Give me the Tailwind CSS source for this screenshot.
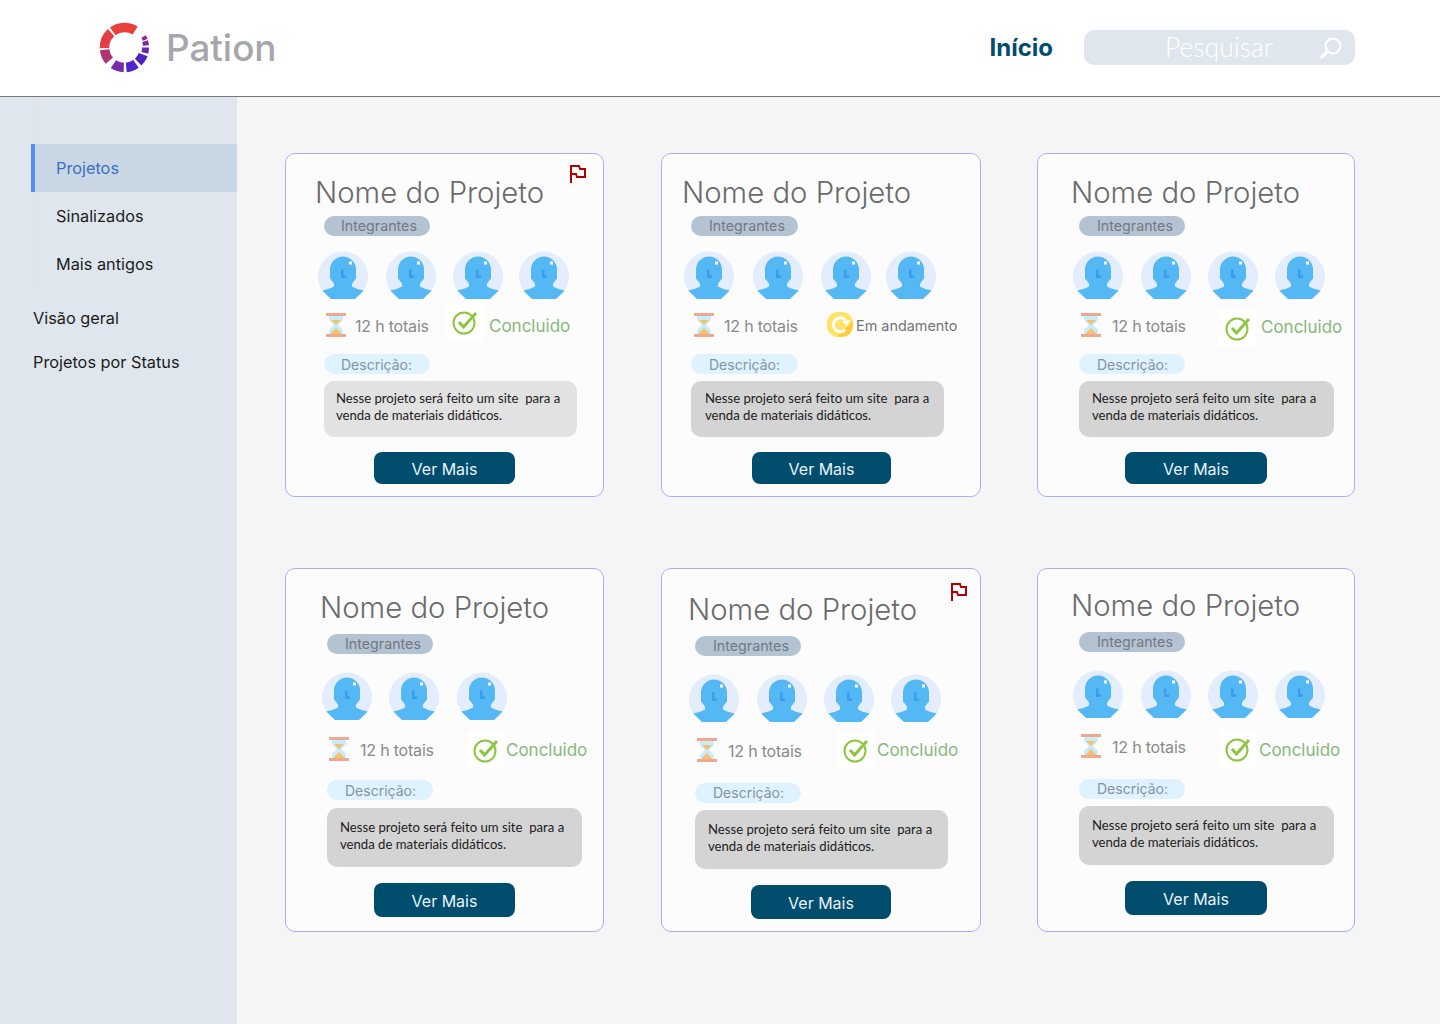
<!DOCTYPE html>
<html lang="pt-BR">
<head>
    <meta charset="UTF-8">
    <meta name="viewport" content="width=device-width, initial-scale=1.0">
    <title>Pation</title>
    <script src="https://cdn.jsdelivr.net/npm/@tailwindcss/browser@4"></script>
</head>
<body class="bg-[#f5f5f5] font-['Inter',sans-serif]">
    <!-- icons -->
    <svg class="hidden" xmlns="http://www.w3.org/2000/svg">
        <symbol id="avatar" viewBox="0 -1.500 50 50">
            <path fill="#e3edfb" d="M14.100 47.500A25 25 0 1 1 35.900 47.500z"/>
            <path fill="#53b8f4" d="M12 18a13 13 0 0 1 26 0v9l-4 5v3c3 2 8 3 11.700 4L37 47.500H13L4.300 39c3.700-1 8.700-2 11.700-4v-3l-4-5z"/>
            <path fill="#3d9be8" d="M23 18h2.500v6H28v2.500h-5z"/>
            <rect x="31" y="10" width="3" height="3" fill="#fff"/>
        </symbol>
        <symbol id="hourglass" viewBox="0 0 20 24">
            <path fill="#c9ecfa" d="M3 2h14v5l-5 5 5 5v5H3v-5l5-5-5-5z"/>
            <path fill="#f5c36e" d="M5 7h10l-5 5zM10 15l5 5v1H5v-1z"/>
            <rect x="0" y="0" width="20" height="3" fill="#eea890"/>
            <rect x="0" y="21" width="20" height="3" fill="#eea890"/>
        </symbol>
        <symbol id="check" viewBox="0 0 26 26">
            <circle cx="12" cy="14" r="10.500" fill="none" stroke="#8cc63f" stroke-width="2"/>
            <path fill="none" stroke="#8cc63f" stroke-width="3" d="M7 13l4.500 5L24 4"/>
        </symbol>
        <symbol id="flag" viewBox="0 0 16 18">
            <path fill="none" stroke="#b00000" stroke-width="2" d="M1 18V1h8l1 3h5v8H7l-1-3H1"/>
        </symbol>
    </svg>

    <header class="h-[97px] pb-[1px] bg-white border-b border-[#777777] flex items-center">
        <svg class="ml-[99px] w-[51px] h-[51px]" viewBox="0 0 51 51" fill="none" stroke-width="9.500">
            <circle cx="25.500" cy="25.500" r="20" pathLength="360" stroke="#e8413c" stroke-dasharray="68 360" transform="rotate(-126 25.500 25.500)"/>
            <circle cx="25.500" cy="25.500" r="20" pathLength="360" stroke="#e23e48" stroke-dasharray="50 360" transform="rotate(-182 25.500 25.500)"/>
            <circle cx="25.500" cy="25.500" r="20" pathLength="360" stroke="#b0346f" stroke-dasharray="35 360" transform="rotate(-221 25.500 25.500)"/>
            <circle cx="25.500" cy="25.500" r="20" pathLength="360" stroke="#7a2bab" stroke-dasharray="32 360" transform="rotate(-268 25.500 25.500)"/>
            <circle cx="25.500" cy="25.500" r="20" pathLength="360" stroke="#5122cd" stroke-dasharray="30 360" transform="rotate(55 25.500 25.500)"/>
            <circle cx="25.500" cy="25.500" r="20" pathLength="360" stroke="#4d23c6" stroke-dasharray="26 360" transform="rotate(21 25.500 25.500)"/>
            <circle cx="25.500" cy="25.500" r="21" pathLength="360" stroke="#6c27ae" stroke-width="7" stroke-dasharray="15 360" transform="rotate(0 25.500 25.500)"/>
            <circle cx="25.500" cy="25.500" r="21.500" pathLength="360" stroke="#81289f" stroke-width="6" stroke-dasharray="12 360" transform="rotate(-17 25.500 25.500)"/>
            <circle cx="25.500" cy="25.500" r="22" pathLength="360" stroke="#8e2a93" stroke-width="5" stroke-dasharray="10 360" transform="rotate(-30 25.500 25.500)"/>
        </svg>
        <span class="ml-[16px] text-[36.800px] font-medium text-[#a6a6ad]">Pation</span>
        <span class="ml-auto mt-[1px] text-[24px] font-bold text-[#004d6e]">Início</span>
        <div class="ml-[31px] mr-[85px] w-[271px] h-[35px] bg-[#dfe6ed] rounded-[10px] flex items-center">
            <span class="ml-[81px] text-[26.500px] font-light text-white font-['Lato',sans-serif]">Pesquisar</span>
            <svg class="ml-auto mr-[12px] w-[24px] h-[24px]" viewBox="0 0 24 24" fill="none" stroke="#ffffff">
                <circle cx="14" cy="10" r="7.500" stroke-width="2"/>
                <path stroke-width="3.500" stroke-linecap="round" d="M8.500 15.500L3 21"/>
            </svg>
        </div>
    </header>

    <div class="flex min-h-[927px]">
        <aside class="w-[237px] shrink-0 bg-[#dfe6ed] text-[16.300px] text-[#1c1c1c]">
            <div class="ml-[32px] h-[190px] border-l-2 border-[#e4e4e4] pt-[47px]">
                <div class="-ml-[3px] h-[48px] flex items-center bg-[#c9d7e5] border-l-4 border-[#4f8ff7] pl-[21px] text-[#3a6fc4]">Projetos</div>
                <div class="h-[48px] flex items-center pl-[22px]">Sinalizados</div>
                <div class="h-[48px] flex items-center pl-[22px]">Mais antigos</div>
            </div>
            <div class="mt-[9px] ml-[33px] h-[44px] flex items-center">Visão geral</div>
            <div class="ml-[33px] h-[44px] flex items-center">Projetos por Status</div>
        </aside>

        <main class="pt-[56px] pl-[48px] grid grid-cols-[320px_320px_318px] grid-rows-[344px_364px] gap-x-[56px] gap-y-[71px] content-start">
            <!-- card 1 -->
            <article class="relative w-[319px] bg-[#fcfcfc] border border-[#a9aeff] rounded-[10px] pl-[28px] pt-[20px]">
                <svg class="absolute right-[17px] top-[11px] w-[16px] h-[18px]"><use href="#flag"/></svg>
                <h2 class="ml-[1px] h-[36px] leading-[38px] text-[29.300px] font-light text-[#6b6b6b]">Nome do Projeto</h2>
                <div class="ml-[10px] mt-[6px] w-[106px] h-[20px] rounded-full bg-[#b3c3d1] pl-[17px] text-[14.250px] leading-[20px] text-[#6f7a85]">Integrantes</div>
                <div class="ml-[4px] mt-[14px] flex gap-[17px] h-[50px]">
                    <svg class="w-[50px] h-[50px]"><use href="#avatar"/></svg>
                    <svg class="w-[50px] h-[50px] ml-[1px]"><use href="#avatar"/></svg>
                    <svg class="w-[50px] h-[50px]"><use href="#avatar"/></svg>
                    <svg class="w-[50px] h-[50px] -ml-[1px]"><use href="#avatar"/></svg>
                </div>
                <div class="mt-[13px] ml-[12px] h-[24px] flex items-center">
                    <svg class="w-[20px] h-[24px]"><use href="#hourglass"/></svg>
                    <span class="ml-[9px] mt-[2px] w-[97px] text-[16px] tracking-[-0.2px] text-[#8a8a8a]">12 h totais</span>
                    <svg class="w-[26px] h-[26px] -mt-[6px] bg-white shadow-[0_0_0_6px_#ffffff]"><use href="#check"/></svg>
                    <span class="ml-[11px] mt-[3px] text-[17px] text-[#86b97a]">Concluido</span>
                </div>
                <div class="ml-[10px] mt-[17px] w-[106px] h-[20px] rounded-full bg-[#def2ff] pl-[17px] text-[14px] leading-[21px] text-[#87949e]">Descrição:</div>
                <p class="ml-[10px] mt-[7px] w-[253px] h-[56px] rounded-[10px] bg-[#e2e2e2] pl-[12px] pt-[9px] font-['Lato',sans-serif] text-[13.150px] leading-[17px] text-[#1c1c1c]">Nesse projeto será feito um site&nbsp; para a venda de materiais didáticos.</p>
                <button class="block ml-[60px] mt-[15px] pt-[1px] w-[141px] h-[32px] rounded-[8px] bg-[#004d6e] text-[16px] text-[#eaf3f7]">Ver Mais</button>
            </article>

            <!-- card 2 -->
            <article class="bg-[#fcfcfc] border border-[#a9aeff] rounded-[10px] pl-[20px] pt-[20px]">
                <h2 class="h-[36px] leading-[38px] text-[29.300px] font-light text-[#6b6b6b]">Nome do Projeto</h2>
                <div class="ml-[9px] mt-[6px] w-[107px] h-[20px] rounded-full bg-[#b3c3d1] pl-[18px] text-[14.250px] leading-[20px] text-[#6f7a85]">Integrantes</div>
                <div class="ml-[2px] mt-[14px] flex gap-[18px] h-[50px]">
                    <svg class="w-[50px] h-[50px]"><use href="#avatar"/></svg>
                    <svg class="w-[50px] h-[50px] ml-[1px]"><use href="#avatar"/></svg>
                    <svg class="w-[50px] h-[50px]"><use href="#avatar"/></svg>
                    <svg class="w-[50px] h-[50px] -ml-[3px]"><use href="#avatar"/></svg>
                </div>
                <div class="mt-[13px] ml-[12px] h-[24px] flex items-center">
                    <svg class="w-[20px] h-[24px]"><use href="#hourglass"/></svg>
                    <span class="ml-[10px] mt-[2px] w-[103px] text-[16px] tracking-[-0.2px] text-[#8a8a8a]">12 h totais</span>
                    <svg class="w-[26px] h-[26px]" viewBox="0 0 26 26">
                        <rect x="0" y="0" width="26" height="25" rx="11" fill="#ffe266"/>
                        <path fill="#ffcd38" d="M25.500 9L10 24.800h5c6 0 11-5 11-11z"/>
                        <path fill="none" stroke="#fff" stroke-width="3" d="M18.500 17.500A7 7 0 1 1 18.500 8"/>
                        <path fill="#fff" d="M15 9l8-1-3 6z"/>
                    </svg>
                    <span class="ml-[3px] mt-[2px] text-[14.400px] text-[#757575]">Em andamento</span>
                </div>
                <div class="ml-[9px] mt-[17px] w-[107px] h-[20px] rounded-full bg-[#def2ff] pl-[18px] text-[14px] leading-[21px] text-[#87949e]">Descrição:</div>
                <p class="ml-[9px] mt-[7px] w-[253px] h-[56px] rounded-[10px] bg-[#d4d4d4] pl-[14px] pt-[9px] font-['Lato',sans-serif] text-[13.150px] leading-[17px] text-[#1c1c1c]">Nesse projeto será feito um site&nbsp; para a venda de materiais didáticos.</p>
                <button class="block ml-[70px] mt-[15px] pt-[1px] w-[139px] h-[32px] rounded-[8px] bg-[#004d6e] text-[16px] text-[#eaf3f7]">Ver Mais</button>
            </article>

            <!-- card 3 -->
            <article class="bg-[#fcfcfc] border border-[#a9aeff] rounded-[10px] pl-[33px] pt-[20px]">
                <h2 class="h-[36px] leading-[38px] text-[29.300px] font-light text-[#6b6b6b]">Nome do Projeto</h2>
                <div class="ml-[8px] mt-[6px] w-[106px] h-[20px] rounded-full bg-[#b3c3d1] pl-[18px] text-[14.250px] leading-[20px] text-[#6f7a85]">Integrantes</div>
                <div class="ml-[2px] mt-[14px] flex gap-[17px] h-[50px]">
                    <svg class="w-[50px] h-[50px]"><use href="#avatar"/></svg>
                    <svg class="w-[50px] h-[50px] ml-[1px]"><use href="#avatar"/></svg>
                    <svg class="w-[50px] h-[50px]"><use href="#avatar"/></svg>
                    <svg class="w-[50px] h-[50px]"><use href="#avatar"/></svg>
                </div>
                <div class="mt-[13px] ml-[10px] h-[24px] flex items-center">
                    <svg class="w-[20px] h-[24px]"><use href="#hourglass"/></svg>
                    <span class="ml-[11px] mt-[2px] w-[113px] text-[16px] tracking-[-0.2px] text-[#8a8a8a]">12 h totais</span>
                    <svg class="w-[26px] h-[26px] mt-[6px] bg-white shadow-[0_0_0_6px_#ffffff]"><use href="#check"/></svg>
                    <span class="ml-[10px] mt-[6px] text-[17px] text-[#86b97a]">Concluido</span>
                </div>
                <div class="ml-[8px] mt-[17px] w-[106px] h-[20px] rounded-full bg-[#def2ff] pl-[18px] text-[14px] leading-[21px] text-[#87949e]">Descrição:</div>
                <p class="ml-[8px] mt-[7px] w-[255px] h-[56px] rounded-[10px] bg-[#d4d4d4] pl-[13px] pt-[9px] font-['Lato',sans-serif] text-[13.150px] leading-[17px] text-[#1c1c1c]">Nesse projeto será feito um site&nbsp; para a venda de materiais didáticos.</p>
                <button class="block ml-[54px] mt-[15px] pt-[1px] w-[142px] h-[32px] rounded-[8px] bg-[#004d6e] text-[16px] text-[#eaf3f7]">Ver Mais</button>
            </article>

            <!-- card 4 -->
            <article class="w-[319px] bg-[#fcfcfc] border border-[#a9aeff] rounded-[10px] pl-[33px] pt-[20px]">
                <h2 class="ml-[1px] h-[36px] leading-[38px] text-[29.300px] font-light text-[#6b6b6b]">Nome do Projeto</h2>
                <div class="ml-[8px] mt-[9px] w-[106px] h-[20px] rounded-full bg-[#b3c3d1] pl-[18px] text-[14.250px] leading-[20px] text-[#6f7a85]">Integrantes</div>
                <div class="ml-[3px] mt-[17px] flex gap-[17px] h-[50px]">
                    <svg class="w-[50px] h-[50px]"><use href="#avatar"/></svg>
                    <svg class="w-[50px] h-[50px]"><use href="#avatar"/></svg>
                    <svg class="w-[50px] h-[50px] ml-[1px]"><use href="#avatar"/></svg>
                </div>
                <div class="mt-[16px] ml-[10px] h-[24px] flex items-center">
                    <svg class="w-[20px] h-[24px]"><use href="#hourglass"/></svg>
                    <span class="ml-[11px] mt-[2px] w-[113px] text-[16px] tracking-[-0.2px] text-[#8a8a8a]">12 h totais</span>
                    <svg class="w-[26px] h-[26px] mt-[2px] bg-white shadow-[0_0_0_6px_#ffffff]"><use href="#check"/></svg>
                    <span class="ml-[7px] mt-[4px] text-[17px] text-[#86b97a]">Concluido</span>
                </div>
                <div class="ml-[8px] mt-[19px] w-[106px] h-[20px] rounded-full bg-[#def2ff] pl-[18px] text-[14px] leading-[21px] text-[#87949e]">Descrição:</div>
                <p class="ml-[8px] mt-[8px] w-[255px] h-[59px] rounded-[10px] bg-[#d4d4d4] pl-[13px] pt-[11px] font-['Lato',sans-serif] text-[13.150px] leading-[17px] text-[#1c1c1c]">Nesse projeto será feito um site&nbsp; para a venda de materiais didáticos.</p>
                <button class="block ml-[55px] mt-[16px] pt-[1px] w-[141px] h-[34px] rounded-[8px] bg-[#004d6e] text-[16px] text-[#eaf3f7]">Ver Mais</button>
            </article>

            <!-- card 5 -->
            <article class="relative bg-[#fcfcfc] border border-[#a9aeff] rounded-[10px] pl-[27px] pt-[22px]">
                <svg class="absolute right-[13px] top-[14px] w-[16px] h-[18px]"><use href="#flag"/></svg>
                <h2 class="-ml-[1px] h-[36px] leading-[38px] text-[29.300px] font-light text-[#6b6b6b]">Nome do Projeto</h2>
                <div class="ml-[6px] mt-[9px] w-[106px] h-[20px] rounded-full bg-[#b3c3d1] pl-[18px] text-[14.250px] leading-[20px] text-[#6f7a85]">Integrantes</div>
                <div class="mt-[17px] flex gap-[17px] h-[50px]">
                    <svg class="w-[50px] h-[50px]"><use href="#avatar"/></svg>
                    <svg class="w-[50px] h-[50px] ml-[1px]"><use href="#avatar"/></svg>
                    <svg class="w-[50px] h-[50px]"><use href="#avatar"/></svg>
                    <svg class="w-[50px] h-[50px]"><use href="#avatar"/></svg>
                </div>
                <div class="mt-[15px] ml-[8px] h-[24px] flex items-center">
                    <svg class="w-[20px] h-[24px]"><use href="#hourglass"/></svg>
                    <span class="ml-[11px] mt-[1px] w-[115px] text-[16px] tracking-[-0.2px] text-[#8a8a8a]">12 h totais</span>
                    <svg class="w-[26px] h-[26px] bg-white shadow-[0_0_0_6px_#ffffff]"><use href="#check"/></svg>
                    <span class="ml-[8px] mt-[2px] text-[17px] text-[#86b97a]">Concluido</span>
                </div>
                <div class="ml-[6px] mt-[21px] w-[106px] h-[20px] rounded-full bg-[#def2ff] pl-[18px] text-[14px] leading-[20px] text-[#87949e]">Descrição:</div>
                <p class="ml-[6px] mt-[7px] w-[253px] h-[59px] rounded-[10px] bg-[#d4d4d4] pl-[13px] pt-[11px] font-['Lato',sans-serif] text-[13.150px] leading-[17px] text-[#1c1c1c]">Nesse projeto será feito um site&nbsp; para a venda de materiais didáticos.</p>
                <button class="block ml-[62px] mt-[16px] pt-[1px] w-[140px] h-[34px] rounded-[8px] bg-[#004d6e] text-[16px] text-[#eaf3f7]">Ver Mais</button>
            </article>

            <!-- card 6 -->
            <article class="bg-[#fcfcfc] border border-[#a9aeff] rounded-[10px] pl-[33px] pt-[18px]">
                <h2 class="h-[36px] leading-[38px] text-[29.300px] font-light text-[#6b6b6b]">Nome do Projeto</h2>
                <div class="ml-[8px] mt-[9px] w-[106px] h-[20px] rounded-full bg-[#b3c3d1] pl-[18px] text-[14.250px] leading-[20px] text-[#6f7a85]">Integrantes</div>
                <div class="ml-[2px] mt-[17px] flex gap-[17px] h-[50px]">
                    <svg class="w-[50px] h-[50px]"><use href="#avatar"/></svg>
                    <svg class="w-[50px] h-[50px] ml-[1px]"><use href="#avatar"/></svg>
                    <svg class="w-[50px] h-[50px]"><use href="#avatar"/></svg>
                    <svg class="w-[50px] h-[50px]"><use href="#avatar"/></svg>
                </div>
                <div class="mt-[15px] ml-[10px] h-[24px] flex items-center">
                    <svg class="w-[20px] h-[24px]"><use href="#hourglass"/></svg>
                    <span class="ml-[11px] mt-[1px] w-[113px] text-[16px] tracking-[-0.2px] text-[#8a8a8a]">12 h totais</span>
                    <svg class="w-[26px] h-[26px] mt-[6px] bg-white shadow-[0_0_0_6px_#ffffff]"><use href="#check"/></svg>
                    <span class="ml-[8px] mt-[10px] text-[17px] text-[#86b97a]">Concluido</span>
                </div>
                <div class="ml-[8px] mt-[21px] w-[106px] h-[20px] rounded-full bg-[#def2ff] pl-[18px] text-[14px] leading-[20px] text-[#87949e]">Descrição:</div>
                <p class="ml-[8px] mt-[7px] w-[255px] h-[59px] rounded-[10px] bg-[#d4d4d4] pl-[13px] pt-[11px] font-['Lato',sans-serif] text-[13.150px] leading-[17px] text-[#1c1c1c]">Nesse projeto será feito um site&nbsp; para a venda de materiais didáticos.</p>
                <button class="block ml-[54px] mt-[16px] pt-[1px] w-[142px] h-[34px] rounded-[8px] bg-[#004d6e] text-[16px] text-[#eaf3f7]">Ver Mais</button>
            </article>
        </main>
    </div>
</body>
</html>
